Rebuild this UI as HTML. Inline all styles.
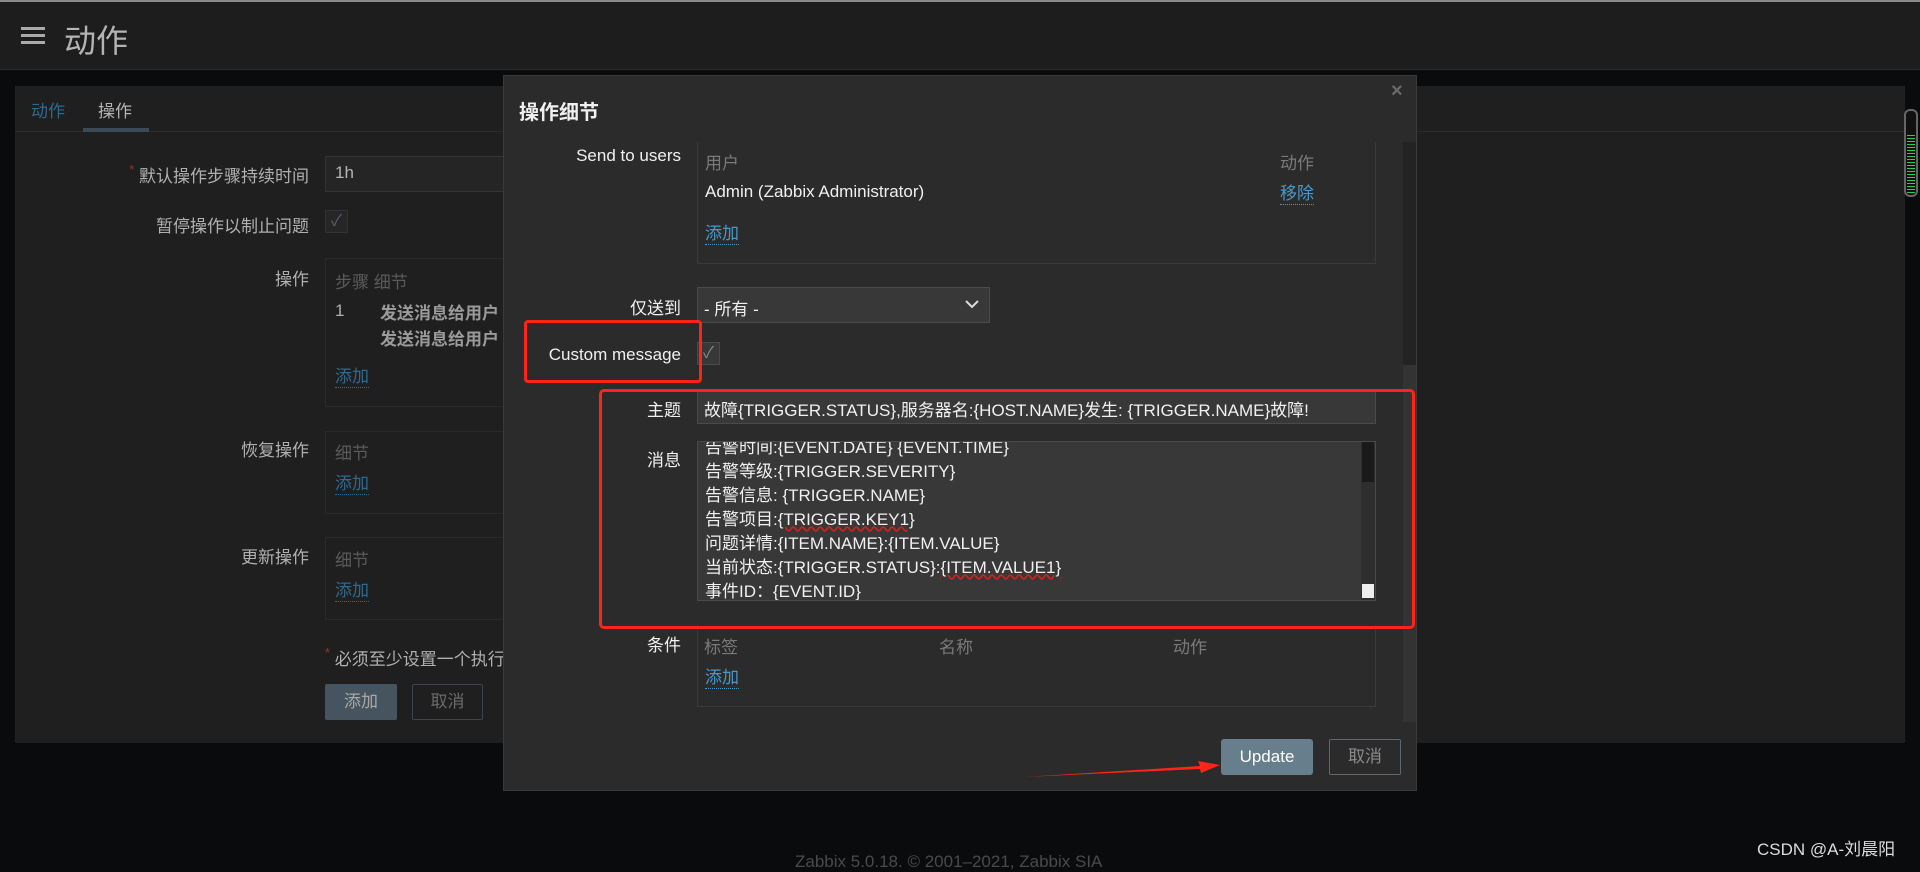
<!DOCTYPE html>
<html><head><meta charset="utf-8">
<style>
*{margin:0;padding:0;box-sizing:border-box}
body{width:1920px;height:866px;overflow:hidden;background:#0a0b0d;font-family:"Liberation Sans","Noto Sans CJK SC",sans-serif;font-size:17px;color:#c8c8c8;position:relative}
.a{position:absolute;white-space:nowrap}
.lnk{color:#2e6a90;border-bottom:1px dotted #2e6a90;line-height:20px}
.mlnk{color:#4a98c8;border-bottom:1px dotted #4a98c8;line-height:20px}
.ml{color:#f0f0f0;text-align:right;width:200px}
</style></head><body>
<!-- header -->
<div class="a" style="left:0;top:0;width:1920px;height:70px;background:#1d1d1d;border-top:2px solid #8a8a8a;border-bottom:1px solid #2a2a2a"></div>
<div class="a" style="left:21px;top:27px;width:24px;height:3px;background:#aaa"></div>
<div class="a" style="left:21px;top:34px;width:24px;height:3px;background:#aaa"></div>
<div class="a" style="left:21px;top:41px;width:24px;height:3px;background:#aaa"></div>
<div class="a" style="left:64px;top:16px;font-size:32px;color:#b4b4b4">动作</div>
<!-- main panel -->
<div class="a" style="left:15px;top:86px;width:1890px;height:657px;background:#1f1f1f"></div>
<div class="a" style="left:15px;top:131px;width:1890px;height:1px;background:#2c2c2c"></div>
<div class="a" style="left:31px;top:97px;color:#2e6a90">动作</div>
<div class="a" style="left:98px;top:97px;color:#b4b4b4">操作</div>
<div class="a" style="left:83px;top:128px;width:66px;height:4px;background:#3c4a55"></div>
<div class="a" style="left:109px;top:162px;width:200px;text-align:right;color:#b0b0b0"><span style="color:#a03030;font-size:13px;vertical-align:top">*</span> 默认操作步骤持续时间</div>
<div class="a" style="left:325px;top:156px;width:200px;height:36px;background:#252525;border:1px solid #333"></div>
<div class="a" style="left:335px;top:163px;color:#b4b4b4">1h</div>
<div class="a" style="left:109px;top:212px;width:200px;text-align:right;color:#b0b0b0">暂停操作以制止问题</div>
<div class="a" style="left:325px;top:210px;width:23px;height:23px;background:#262626;border:1px solid #333;color:#52626e;font-size:16px;text-align:center;line-height:21px">✓</div>
<div class="a" style="left:109px;top:265px;width:200px;text-align:right;color:#b0b0b0">操作</div>
<div class="a" style="left:325px;top:258px;width:200px;height:149px;border:1px solid #2a2a2a"></div>
<div class="a" style="left:335px;top:268px;color:#5a5a5a">步骤&nbsp;细节</div>
<div class="a" style="left:335px;top:301px;color:#b0b0b0">1</div>
<div class="a" style="left:380px;top:299px;color:#9a9a9a;font-weight:bold">发送消息给用户</div>
<div class="a" style="left:380px;top:325px;color:#9a9a9a;font-weight:bold">发送消息给用户</div>
<div class="a lnk" style="left:335px;top:367px">添加</div>
<div class="a" style="left:109px;top:436px;width:200px;text-align:right;color:#b0b0b0">恢复操作</div>
<div class="a" style="left:325px;top:431px;width:200px;height:83px;border:1px solid #2a2a2a"></div>
<div class="a" style="left:335px;top:439px;color:#5a5a5a">细节</div>
<div class="a lnk" style="left:335px;top:474px">添加</div>
<div class="a" style="left:109px;top:543px;width:200px;text-align:right;color:#b0b0b0">更新操作</div>
<div class="a" style="left:325px;top:537px;width:200px;height:83px;border:1px solid #2a2a2a"></div>
<div class="a" style="left:335px;top:546px;color:#5a5a5a">细节</div>
<div class="a lnk" style="left:335px;top:581px">添加</div>
<div class="a" style="left:325px;top:645px;color:#b0b0b0"><span style="color:#a03030;font-size:13px;vertical-align:top">*</span> 必须至少设置一个执行</div>
<div class="a" style="left:325px;top:684px;width:72px;height:36px;background:#45545f;border-radius:2px;color:#a8a8a8;text-align:center;line-height:36px">添加</div>
<div class="a" style="left:412px;top:684px;width:71px;height:36px;border:1px solid #3a4650;border-radius:2px;color:#6a6a6a;text-align:center;line-height:34px">取消</div>
<!-- right scroll widget -->
<div class="a" style="left:1904px;top:109px;width:14px;height:88px;border:2px solid #666;border-radius:6px;background:#111"></div>
<div class="a" style="left:1907px;top:135px;width:8px;height:58px;background:repeating-linear-gradient(#2ecc55 0 1px,transparent 1px 3px)"></div>
<!-- modal -->
<div class="a" style="left:503px;top:75px;width:914px;height:716px;background:#2b2b2b;border:1px solid #3a3a3a"></div>
<div class="a" style="left:519px;top:96px;font-size:20px;font-weight:bold;color:#f0f0f0">操作细节</div>
<div class="a" style="left:1391px;top:80px;font-size:20px;font-weight:bold;color:#6a6a6a">×</div>
<div class="a" style="left:1403px;top:142px;width:13px;height:223px;background:#232323"></div>
<div class="a" style="left:1403px;top:365px;width:13px;height:357px;background:#333"></div>
<div class="a ml" style="left:481px;top:146px">Send to users</div>
<div class="a" style="left:697px;top:142px;width:679px;height:122px;border:1px solid #3a3a3a;border-top:none"></div>
<div class="a" style="left:705px;top:149px;color:#7a7a7a">用户</div>
<div class="a" style="left:1280px;top:149px;color:#7a7a7a">动作</div>
<div class="a" style="left:705px;top:182px;color:#f0f0f0">Admin (Zabbix Administrator)</div>
<div class="a mlnk" style="left:1280px;top:184px">移除</div>
<div class="a mlnk" style="left:705px;top:224px">添加</div>
<div class="a ml" style="left:481px;top:294px">仅送到</div>
<div class="a" style="left:697px;top:287px;width:293px;height:36px;background:#383838;border:1px solid #4a4a4a"></div>
<div class="a" style="left:704px;top:295px;color:#f0f0f0">- 所有 -</div>
<svg class="a" style="left:964px;top:298px" width="16" height="12"><path d="M2 3 L8 9 L14 3" stroke="#ddd" stroke-width="2" fill="none"/></svg>
<div class="a ml" style="left:481px;top:345px">Custom message</div>
<div class="a" style="left:697px;top:342px;width:23px;height:23px;background:#383838;border:1px solid #4a4a4a;color:#888;font-size:16px;text-align:center;line-height:21px">✓</div>
<div class="a ml" style="left:481px;top:396px">主题</div>
<div class="a" style="left:697px;top:390px;width:679px;height:34px;background:#383838;border:1px solid #4a4a4a"></div>
<div class="a" style="left:704px;top:396px;color:#f0f0f0">故障{TRIGGER.STATUS},服务器名:{HOST.NAME}发生: {TRIGGER.NAME}故障!</div>
<div class="a ml" style="left:481px;top:446px">消息</div>
<div class="a" style="left:697px;top:441px;width:679px;height:160px;background:#383838;border:1px solid #4a4a4a;overflow:hidden">
<div style="position:absolute;left:7px;top:-6px;line-height:24px;color:#f0f0f0">告警时间:{EVENT.DATE} {EVENT.TIME}<br>告警等级:{TRIGGER.SEVERITY}<br>告警信息: {TRIGGER.NAME}<br>告警项目:<span style="text-decoration:underline wavy #d02020">{TRIGGER.KEY1}</span><br>问题详情:{ITEM.NAME}:{ITEM.VALUE}<br>当前状态:{TRIGGER.STATUS}:<span style="text-decoration:underline wavy #d02020">{ITEM.VALUE1}</span><br>事件ID：{EVENT.ID}</div>
<div style="position:absolute;left:663px;top:0;width:14px;height:158px;background:#2e2e2e"></div>
<div style="position:absolute;left:664px;top:0;width:12px;height:40px;background:#1a1a1a"></div>
<div style="position:absolute;left:664px;top:142px;width:12px;height:14px;background:#eee"></div>
</div>
<div class="a ml" style="left:481px;top:631px">条件</div>
<div class="a" style="left:697px;top:625px;width:679px;height:82px;border:1px solid #3a3a3a;border-top:none"></div>
<div class="a" style="left:704px;top:633px;color:#7a7a7a">标签</div>
<div class="a" style="left:939px;top:633px;color:#7a7a7a">名称</div>
<div class="a" style="left:1173px;top:633px;color:#7a7a7a">动作</div>
<div class="a mlnk" style="left:705px;top:668px">添加</div>
<div class="a" style="left:1221px;top:739px;width:92px;height:36px;background:#677f8c;border-radius:3px;color:#fff;text-align:center;line-height:36px">Update</div>
<div class="a" style="left:1329px;top:739px;width:72px;height:36px;border:1px solid #5a6a75;border-radius:2px;color:#8a8a8a;text-align:center;line-height:34px">取消</div>
<!-- red annotations -->
<div class="a" style="left:524px;top:320px;width:178px;height:63px;border:3px solid #ff2418;border-radius:4px"></div>
<div class="a" style="left:599px;top:389px;width:816px;height:240px;border:3px solid #ff2418;border-radius:5px"></div>
<svg class="a" style="left:1020px;top:755px" width="205" height="30"><path d="M4 22 L180 11 L178 6 L200 10 L181 18 L180 14 Z" fill="#ff2418"/></svg>
<!-- footer -->
<div class="a" style="left:795px;top:852px;color:#4a4a4a">Zabbix 5.0.18. © 2001–2021, Zabbix SIA</div>
<div class="a" style="left:1757px;top:835px;color:#dcdcdc;font-size:17px">CSDN @A-刘晨阳</div>
</body></html>
